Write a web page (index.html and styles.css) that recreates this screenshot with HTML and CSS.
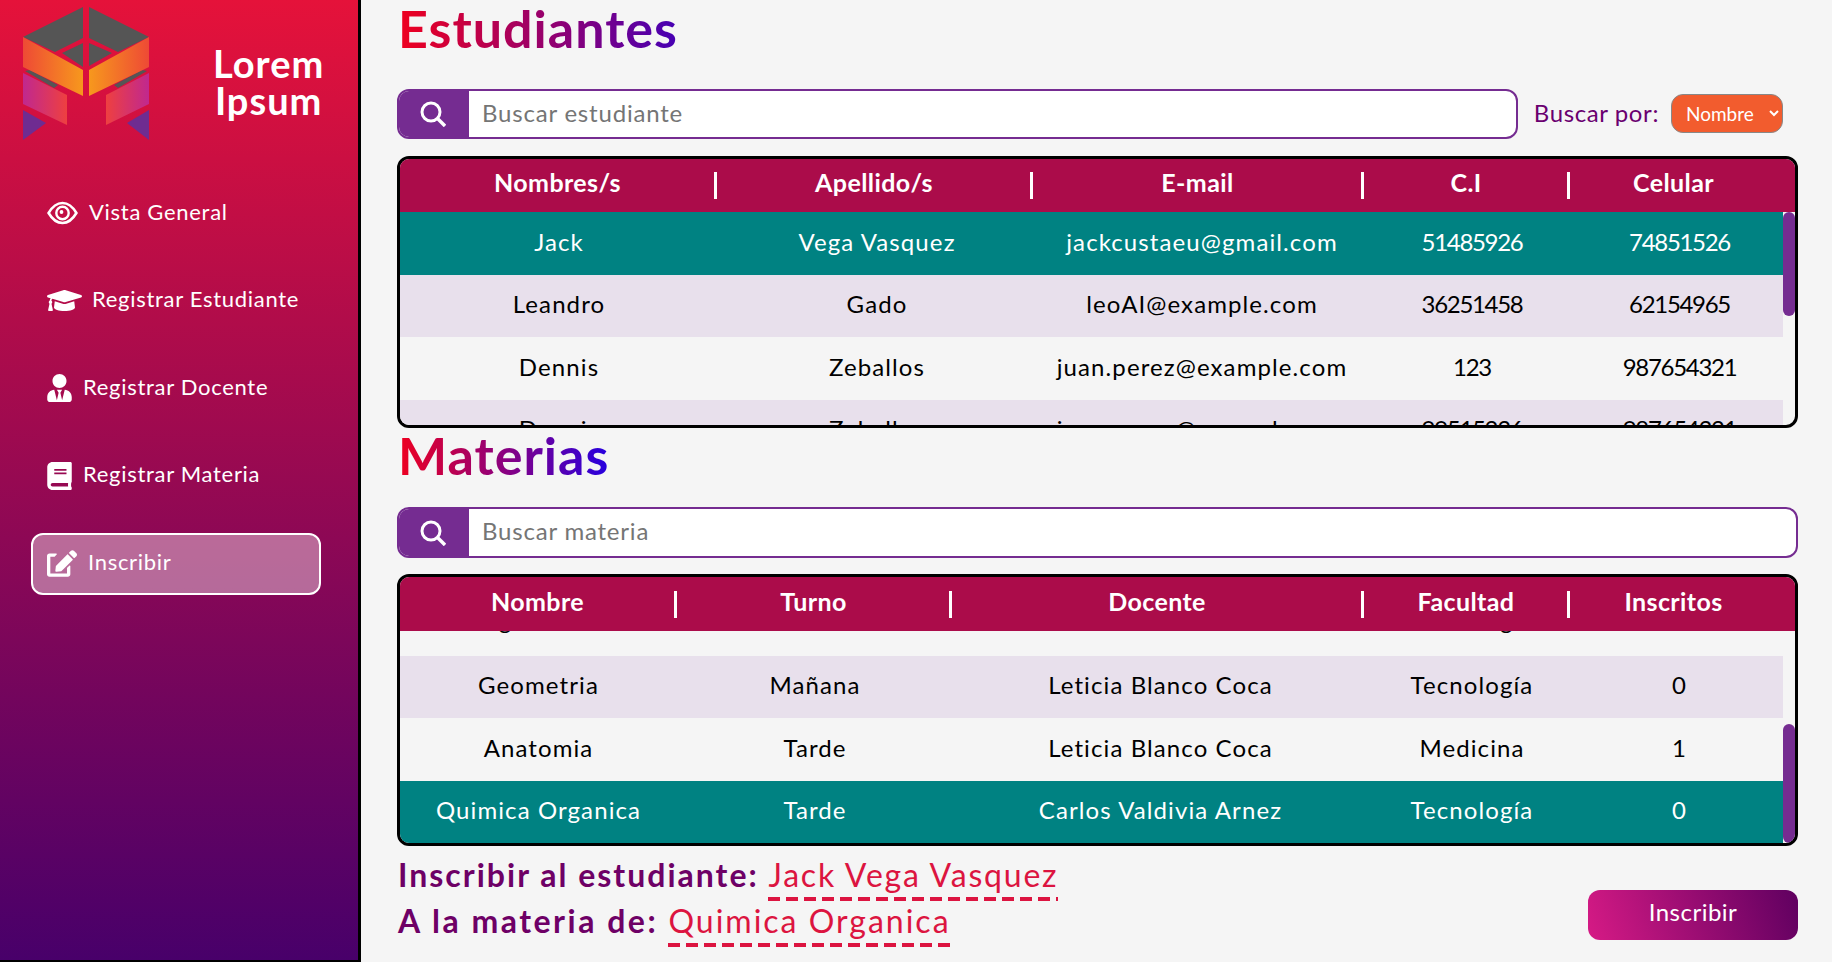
FILE: index.html
```html
<!DOCTYPE html>
<html lang="es">
<head>
    <meta charset="utf-8">
    <title>Inscribir</title>
    <link rel="stylesheet" href="styles.css">
</head>
<body>
    <aside class="sidebar">
        <div class="brand">
            <svg class="logo" viewBox="0 0 170 140" width="170" height="140">
                <defs>
                    <linearGradient id="orange-l" x1="0" x2="1" y1="0" y2="0"><stop offset="0" stop-color="#ee4a35"/><stop offset="1" stop-color="#f7981d"/></linearGradient>
                    <linearGradient id="orange-r" x1="1" x2="0" y1="0" y2="0"><stop offset="0" stop-color="#ee4a35"/><stop offset="1" stop-color="#f7981d"/></linearGradient>
                    <linearGradient id="pink-l" x1="0" x2="1" y1="0" y2="0"><stop offset="0" stop-color="#c0288f"/><stop offset="1" stop-color="#ee4040"/></linearGradient>
                    <linearGradient id="pink-r" x1="1" x2="0" y1="0" y2="0"><stop offset="0" stop-color="#c0288f"/><stop offset="1" stop-color="#ee4040"/></linearGradient>
                </defs>
                <polygon fill="#555" points="23,37 83,7 83,38 55,52"/>
                <polygon fill="#555" points="89,7 149,37 118,52 89,38"/>
                <polygon fill="#555" points="62,53 83,43 83,67"/>
                <polygon fill="#555" points="89,43 112,53 89,66"/>
                <polygon fill="#555" points="25,71 30,70 58,85 54,88"/>
                <polygon fill="#555" points="147,71 142,70 114,85 118,88"/>
                <polygon fill="url(#orange-l)" points="23,37 83,70 83,96 23,67"/>
                <polygon fill="url(#orange-r)" points="89,70 149,37 149,67 89,96"/>
                <polygon fill="url(#pink-l)" points="23,73 67,95 67,125 23,104"/>
                <polygon fill="url(#pink-r)" points="149,73 106,95 106,125 149,104"/>
                <polygon fill="#6f2c91" points="23,110 46,123 23,140"/>
                <polygon fill="#6f2c91" points="149,110 127,123 149,140"/>
            </svg>
            <div class="brand-name">Lorem<br>Ipsum</div>
        </div>
        <nav class="menu">
            <a class="menu-item">
                <svg class="icon-eye" viewBox="0 0 31 24"><path fill="none" stroke="#fff" stroke-width="2.6" d="M1.6 12C6 4.5 11 2 15.5 2S25 4.5 29.4 12C25 19.5 20 22 15.5 22S6 19.5 1.6 12Z"/><circle cx="15.5" cy="12" r="6.2" fill="none" stroke="#fff" stroke-width="2.4"/><circle cx="14.5" cy="11" r="1.9" fill="#fff"/></svg>
                Vista General
            </a>
            <a class="menu-item">
                <svg class="icon-cap" viewBox="0 50 640 410"><path fill="#fff" d="M622.34 153.2L343.4 67.5c-15.2-4.67-31.6-4.67-46.79 0L17.66 153.2c-23.54 7.23-23.54 38.36 0 45.59l48.63 14.94c-10.67 13.19-17.23 29.28-17.88 46.9C38.78 266.15 32 276.11 32 288c0 10.78 5.68 19.85 13.86 25.65L20.33 428.53C18.11 438.52 25.71 448 35.94 448h56.11c10.24 0 17.84-9.48 15.62-19.47L82.14 313.65C90.32 307.85 96 298.78 96 288c0-11.57-6.47-21.25-15.66-26.87.76-15.02 8.44-28.3 20.69-36.72L296.6 284.5c9.06 2.78 26.44 6.25 46.79 0l278.95-85.7c23.55-7.24 23.55-38.36 0-45.6zM352.79 315.09c-28.53 8.76-52.84 3.92-65.59 0l-145.02-44.55L128 384c0 35.35 85.96 64 192 64s192-28.65 192-64l-14.18-113.47-145.03 44.56z"/></svg>
                Registrar Estudiante
            </a>
            <a class="menu-item">
                <svg class="icon-side" viewBox="0 0 448 512"><path fill="#fff" d="M224 256c70.7 0 128-57.3 128-128S294.7 0 224 0 96 57.3 96 128s57.3 128 128 128zm95.8 32.6L272 480l-32-136 32-56h-96l32 56-32 136-47.8-191.4C56.9 292 0 350.3 0 422.4V464c0 26.5 21.5 48 48 48h352c26.5 0 48-21.5 48-48v-41.6c0-72.1-56.9-130.4-128.2-133.8z"/></svg>
                Registrar Docente
            </a>
            <a class="menu-item">
                <svg class="icon-side" viewBox="0 0 448 512"><path fill="#fff" d="M448 360V24c0-13.3-10.7-24-24-24H96C43 0 0 43 0 96v320c0 53 43 96 96 96h328c13.3 0 24-10.7 24-24v-16c0-7.5-3.5-14.3-8.9-18.7-4.2-15.4-4.2-59.3 0-74.7 5.4-4.3 8.9-11.1 8.9-18.6zM128 134c0-3.3 2.7-6 6-6h212c3.3 0 6 2.7 6 6v20c0 3.3-2.7 6-6 6H134c-3.3 0-6-2.7-6-6v-20zm0 64c0-3.3 2.7-6 6-6h212c3.3 0 6 2.7 6 6v20c0 3.3-2.7 6-6 6H134c-3.3 0-6-2.7-6-6v-20zm253.4 250H96c-17.7 0-32-14.3-32-32 0-17.6 14.4-32 32-32h285.4c-1.9 17.1-1.9 46.9 0 64z"/></svg>
                Registrar Materia
            </a>
            <a class="menu-item active">
                <svg class="icon-edit" viewBox="0 0 576 512"><path fill="#fff" d="M402.6 83.2l90.2 90.2c3.8 3.8 3.8 10 0 13.8L274.4 405.6l-92.8 10.3c-12.4 1.4-22.9-9.1-21.5-21.5l10.3-92.8L388.8 83.2c3.8-3.8 10-3.8 13.8 0zm162-22.9l-48.8-48.8c-15.2-15.2-39.9-15.2-55.2 0l-35.4 35.4c-3.8 3.8-3.8 10 0 13.8l90.2 90.2c3.8 3.8 10 3.8 13.8 0l35.4-35.4c15.2-15.3 15.2-40 0-55.2zM384 346.2V448H64V128h73.1c3.2 0 6.2-1.3 8.5-3.5l40-40c7.6-7.6 2.2-20.5-8.5-20.5H48C21.5 64 0 85.5 0 112v352c0 26.5 21.5 48 48 48h352c26.5 0 48-21.5 48-48V306.2c0-10.7-12.9-16-20.5-8.5l-40 40c-2.2 2.3-3.5 5.3-3.5 8.5z"/></svg>
                Inscribir
            </a>
        </nav>
    </aside>

    <main class="content">
        <section class="students">
            <h1 class="title title-students">Estudiantes</h1>
            <div class="search-row">
                <div class="search">
                    <span class="search-icon"><svg viewBox="0 0 26 26" width="26" height="26"><circle cx="11" cy="11" r="9" fill="none" stroke="#fff" stroke-width="3"/><path d="M17.5 17.5L25 25" stroke="#fff" stroke-width="3.4"/></svg></span>
                    <input class="search-input" type="text" placeholder="Buscar estudiante">
                </div>
                <label class="search-by" for="buscar-por">Buscar por:</label>
                <select class="search-select" id="buscar-por"><option>Nombre</option><option>Apellido</option></select>
            </div>
            <div class="table-box">
                <table class="head-table">
                    <colgroup><col class="w-317"><col class="w-316"><col class="w-331"><col class="w-206"><col class="w-225"></colgroup>
                    <thead><tr><th>Nombres/s</th><th>Apellido/s</th><th>E-mail</th><th>C.I</th><th>Celular</th></tr></thead>
                </table>
                <div class="table-scroll">
                    <table class="body-table">
                        <colgroup><col class="w-318"><col class="w-318"><col class="w-332"><col class="w-208"><col class="w-207"></colgroup>
                        <tbody>
                            <tr class="selected"><td>Jack</td><td>Vega Vasquez</td><td>jackcustaeu@gmail.com</td><td class="num">51485926</td><td class="num">74851526</td></tr>
                            <tr class="alt"><td>Leandro</td><td>Gado</td><td>leoAI@example.com</td><td class="num">36251458</td><td class="num">62154965</td></tr>
                            <tr><td>Dennis</td><td>Zeballos</td><td>juan.perez@example.com</td><td class="num">123</td><td class="num">987654321</td></tr>
                            <tr class="alt"><td>Dennis</td><td>Zeballos</td><td>juan.perez@example.com</td><td class="num">99515236</td><td class="num">987654321</td></tr>
                        </tbody>
                    </table>
                </div>
                <div class="thumb thumb-students"></div>
            </div>
        </section>

        <section class="subjects">
            <h1 class="title title-subjects">Materias</h1>
            <div class="search">
                <span class="search-icon"><svg viewBox="0 0 26 26" width="26" height="26"><circle cx="11" cy="11" r="9" fill="none" stroke="#fff" stroke-width="3"/><path d="M17.5 17.5L25 25" stroke="#fff" stroke-width="3.4"/></svg></span>
                <input class="search-input" type="text" placeholder="Buscar materia">
            </div>
            <div class="table-box">
                <table class="head-table">
                    <colgroup><col class="w-277"><col class="w-275"><col class="w-412"><col class="w-206"><col class="w-225"></colgroup>
                    <thead><tr><th>Nombre</th><th>Turno</th><th>Docente</th><th>Facultad</th><th>Inscritos</th></tr></thead>
                </table>
                <div class="table-scroll scroll-end">
                    <table class="body-table">
                        <colgroup><col class="w-277"><col class="w-276"><col class="w-415"><col class="w-208"><col class="w-207"></colgroup>
                        <tbody>
                            <tr class="cut"><td>Programacion</td><td>Mañana</td><td>Leticia Blanco Coca</td><td>Tecnología</td><td>0</td></tr>
                            <tr class="alt"><td>Geometria</td><td>Mañana</td><td>Leticia Blanco Coca</td><td>Tecnología</td><td>0</td></tr>
                            <tr><td>Anatomia</td><td>Tarde</td><td>Leticia Blanco Coca</td><td>Medicina</td><td>1</td></tr>
                            <tr class="selected"><td>Quimica Organica</td><td>Tarde</td><td>Carlos Valdivia Arnez</td><td>Tecnología</td><td>0</td></tr>
                        </tbody>
                    </table>
                </div>
                <div class="thumb thumb-subjects"></div>
            </div>
        </section>

        <div class="enroll">
            <div class="enroll-text">
                <p class="enroll-line">Inscribir al estudiante: <span class="enroll-value">Jack Vega Vasquez</span></p>
                <p class="enroll-line enroll-line-wide">A la materia de: <span class="enroll-value">Quimica Organica</span></p>
            </div>
            <button class="enroll-btn">Inscribir</button>
        </div>
    </main>
</body>
</html>
```

FILE: styles.css
```css
* {
    box-sizing: border-box;
}

body {
    margin: 0;
    height: 100vh;
    display: flex;
    overflow: hidden;
    background-color: #f5f5f5;
    font-family: "Lato", "Open Sans", sans-serif;
}

/* sidebar */
.sidebar {
    width: 361px;
    flex-shrink: 0;
    height: 962px;
    border-right: 3px solid #000;
    border-bottom: 2px solid #000;
    background: linear-gradient(to bottom, #e5123a, #48006a);
}

.brand {
    height: 183px;
    display: flex;
    align-items: flex-start;
}

.logo {
    flex-shrink: 0;
}

.brand-name {
    margin-top: 45px;
    margin-left: 43px;
    color: #fff;
    font-size: 38px;
    font-weight: 700;
    letter-spacing: 1px;
    line-height: 37px;
    text-align: center;
}

.menu {
    display: flex;
    flex-direction: column;
    gap: 25.5px;
    padding: 0 37px 0 31px;
}

.menu-item {
    height: 62px;
    padding: 0 14px 6px;
    display: flex;
    align-items: center;
    gap: 11px;
    color: #fff;
    font-size: 22px;
    letter-spacing: 0.7px;
    border: 2px solid transparent;
    border-radius: 12px;
}

.menu-item svg {
    margin-top: 4px;
}

.menu-item.active {
    border-color: #fff;
    background-color: rgba(255, 255, 255, 0.4);
}

.icon-eye {
    width: 31px;
    height: 24px;
}

.icon-cap {
    width: 35px;
    height: 25px;
    margin-right: -1px;
}

.icon-side {
    width: 25px;
    height: 28px;
}

.icon-edit {
    width: 30px;
    height: 27px;
}

/* main column */
.content {
    flex: 1;
    min-width: 0;
    padding: 0 34px 0 36px;
}

.title {
    margin: 0;
    height: 72px;
    width: fit-content;
    padding-left: 1px;
    font-size: 52px;
    font-weight: 700;
    letter-spacing: 1px;
    line-height: 72px;
    color: transparent;
    -webkit-background-clip: text;
    background-clip: text;
}

.title-students {
    background-image: linear-gradient(to right, #f0001e, #4600b4);
    margin-top: -8px;
    margin-bottom: 25px;
}

.title-subjects {
    background-image: linear-gradient(to right, #f0001e, #2600e0);
    margin-top: -9px;
    margin-bottom: 16px;
}

.search-row {
    display: flex;
    align-items: center;
}

.search {
    flex: 1;
    height: 50px;
    display: flex;
    border: 2px solid #752c91;
    border-radius: 12px;
    overflow: hidden;
    background-color: #fff;
}

.subjects .search {
    height: 51px;
}

.search-icon {
    width: 70px;
    flex-shrink: 0;
    padding-right: 3px;
    display: flex;
    align-items: center;
    justify-content: center;
    background-color: #752c91;
}

.search-input {
    flex: 1;
    min-width: 0;
    border: none;
    outline: none;
    padding: 0 14px 4px 13px;
    font-family: inherit;
    font-size: 24px;
    letter-spacing: 0.8px;
    background: transparent;
}

.search-by {
    margin-left: 16px;
    margin-right: 12px;
    padding-bottom: 4px;
    color: #6a0070;
    font-size: 24px;
    letter-spacing: 0.6px;
}

.search-select {
    width: 112px;
    height: 39px;
    margin-right: 15px;
    margin-bottom: 1px;
    padding-left: 10px;
    color: #fff;
    font-family: inherit;
    font-size: 19px;
    background-color: #f25c2e;
    border: 1px solid #888;
    border-radius: 12px;
}

/* tables */
.table-box {
    position: relative;
    margin-top: 17px;
    height: 272px;
    border: 3px solid #000;
    border-radius: 12px;
    overflow: hidden;
}

.subjects .table-box {
    margin-top: 16px;
}

.head-table,
.body-table {
    border-collapse: collapse;
    table-layout: fixed;
}

.head-table {
    width: 1395px;
}

.body-table {
    width: 1383px;
    flex-shrink: 0;
}

th {
    height: 53px;
    padding: 0 2px 7px 0;
    color: #fff;
    font-size: 25px;
    font-weight: 700;
    letter-spacing: 0.4px;
    background: linear-gradient(#fff, #fff) right center / 3px 27px no-repeat #ab0c4a;
}

.subjects th {
    height: 54px;
}

th:last-child {
    padding-right: 18px;
    background: #ab0c4a;
}

td {
    padding: 0 0 4px;
    height: 62.5px;
    font-size: 24px;
    letter-spacing: 1.1px;
    text-align: center;
    color: #000;
}

td.num {
    letter-spacing: -1.3px;
}

tr.alt {
    background-color: #e8e0ec;
}

tr.cut td {
    padding-bottom: 10px;
}

tr.selected {
    background-color: #008282;
}

tr.selected td {
    color: #fff;
}

.table-scroll {
    height: 213px;
    overflow: hidden;
}

.scroll-end {
    height: 212px;
    display: flex;
    flex-direction: column-reverse;
}

/* scrollbar handle, the browser hides the real one in the photo */
.thumb {
    position: absolute;
    right: 0;
    width: 12px;
    background-color: #752c91;
    border-radius: 6px;
}

.thumb-students {
    top: 53px;
    height: 104px;
}

.thumb-subjects {
    bottom: 0;
    height: 119px;
}

/* bottom strip */
.enroll {
    display: flex;
    justify-content: space-between;
    align-items: flex-end;
}

.enroll-text {
    padding-top: 6px;
}

.enroll-line {
    margin: 0 0 0 1px;
    height: 46px;
    color: #6e0066;
    font-size: 32px;
    font-weight: 700;
    letter-spacing: 2px;
    line-height: 46px;
}

.enroll-line-wide {
    letter-spacing: 2.5px;
}

.enroll-value {
    color: #dc1440;
    font-weight: 400;
    letter-spacing: 1.8px;
    padding-bottom: 7px;
    background: repeating-linear-gradient(to right, #dc1440 0 12px, transparent 12px 18px) left bottom / 100% 4px no-repeat;
}

.enroll-line-wide .enroll-value {
    letter-spacing: 2px;
}

.enroll-btn {
    width: 210px;
    height: 50px;
    margin-bottom: 4px;
    padding-bottom: 8px;
    color: #fff;
    font-family: inherit;
    font-size: 24px;
    letter-spacing: 0.5px;
    border: none;
    border-radius: 12px;
    background: linear-gradient(70deg, #d61a85, #5f0060);
}

.w-206 { width: 206px; }
.w-207 { width: 207px; }
.w-208 { width: 208px; }
.w-225 { width: 225px; }
.w-275 { width: 275px; }
.w-276 { width: 276px; }
.w-277 { width: 277px; }
.w-316 { width: 316px; }
.w-317 { width: 317px; }
.w-318 { width: 318px; }
.w-331 { width: 331px; }
.w-332 { width: 332px; }
.w-412 { width: 412px; }
.w-415 { width: 415px; }
```
